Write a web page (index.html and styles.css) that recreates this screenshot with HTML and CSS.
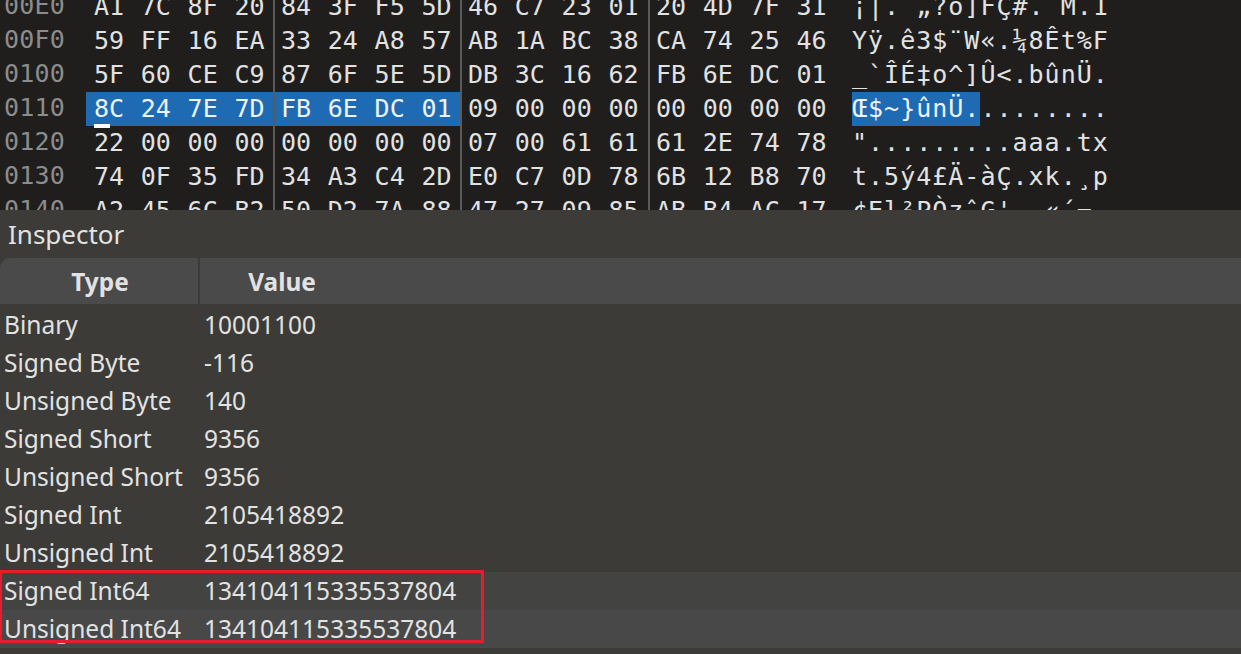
FILE: index.html
```html
<!DOCTYPE html>
<html lang="en">
<head>
<meta charset="utf-8">
<title>Inspector</title>
<link rel="stylesheet" href="styles.css">
</head>
<body>
<div class="app">
  <section class="hex">
    <div class="hexrow"><span class="off">00E0</span><div class="grp g1"><span>A1</span><span>7C</span><span>8F</span><span>20</span></div><div class="grp"><span>84</span><span>3F</span><span>F5</span><span>5D</span></div><div class="grp"><span>46</span><span>C7</span><span>23</span><span>01</span></div><div class="grp"><span>20</span><span>4D</span><span>7F</span><span>31</span></div><span class="asc">¡|. „?õ]FÇ#. M.1</span></div>
    <div class="hexrow"><span class="off">00F0</span><div class="grp g1"><span>59</span><span>FF</span><span>16</span><span>EA</span></div><div class="grp"><span>33</span><span>24</span><span>A8</span><span>57</span></div><div class="grp"><span>AB</span><span>1A</span><span>BC</span><span>38</span></div><div class="grp"><span>CA</span><span>74</span><span>25</span><span>46</span></div><span class="asc">Yÿ.ê3$¨W«.¼8Êt%F</span></div>
    <div class="hexrow"><span class="off">0100</span><div class="grp g1"><span>5F</span><span>60</span><span>CE</span><span>C9</span></div><div class="grp"><span>87</span><span>6F</span><span>5E</span><span>5D</span></div><div class="grp"><span>DB</span><span>3C</span><span>16</span><span>62</span></div><div class="grp"><span>FB</span><span>6E</span><span>DC</span><span>01</span></div><span class="asc">_`ÎÉ‡o^]Û&lt;.bûnÜ.</span></div>
    <div class="hexrow"><span class="off">0110</span><div class="grp g1 sel"><span class="cur">8C</span><span>24</span><span>7E</span><span>7D</span></div><div class="grp sel"><span>FB</span><span>6E</span><span>DC</span><span>01</span></div><div class="grp"><span>09</span><span>00</span><span>00</span><span>00</span></div><div class="grp"><span>00</span><span>00</span><span>00</span><span>00</span></div><span class="asc"><mark class="ascsel">Œ$~}ûnÜ.</mark>........</span></div>
    <div class="hexrow"><span class="off">0120</span><div class="grp g1"><span>22</span><span>00</span><span>00</span><span>00</span></div><div class="grp"><span>00</span><span>00</span><span>00</span><span>00</span></div><div class="grp"><span>07</span><span>00</span><span>61</span><span>61</span></div><div class="grp"><span>61</span><span>2E</span><span>74</span><span>78</span></div><span class="asc">".........aaa.tx</span></div>
    <div class="hexrow"><span class="off">0130</span><div class="grp g1"><span>74</span><span>0F</span><span>35</span><span>FD</span></div><div class="grp"><span>34</span><span>A3</span><span>C4</span><span>2D</span></div><div class="grp"><span>E0</span><span>C7</span><span>0D</span><span>78</span></div><div class="grp"><span>6B</span><span>12</span><span>B8</span><span>70</span></div><span class="asc">t.5ý4£Ä-àÇ.xk.¸p</span></div>
    <div class="hexrow"><span class="off">0140</span><div class="grp g1"><span>A2</span><span>45</span><span>6C</span><span>B2</span></div><div class="grp"><span>50</span><span>D2</span><span>7A</span><span>88</span></div><div class="grp"><span>47</span><span>27</span><span>09</span><span>85</span></div><div class="grp"><span>AB</span><span>B4</span><span>AC</span><span>17</span></div><span class="asc">¢El²PÒzˆG'..«´¬.</span></div>
  </section>
  <section class="inspector">
    <h2 class="title">Inspector</h2>
    <div class="thead"><div class="th th-type">Type</div><div class="th th-value">Value</div></div>
    <div class="tr"><span class="td-type">Binary</span><span>10001100</span></div>
    <div class="tr"><span class="td-type">Signed Byte</span><span>-116</span></div>
    <div class="tr"><span class="td-type">Unsigned Byte</span><span>140</span></div>
    <div class="tr"><span class="td-type">Signed Short</span><span>9356</span></div>
    <div class="tr"><span class="td-type">Unsigned Short</span><span>9356</span></div>
    <div class="tr"><span class="td-type">Signed Int</span><span>2105418892</span></div>
    <div class="tr"><span class="td-type">Unsigned Int</span><span>2105418892</span></div>
    <div class="tr tr-hi"><span class="td-type">Signed Int64</span><span>134104115335537804</span></div>
    <div class="tr tr-hi2"><span class="td-type">Unsigned Int64</span><span>134104115335537804</span></div>
    <div class="annot"></div>
  </section>
</div>
</body>
</html>
```
FILE: styles.css
```css
* { box-sizing: border-box; }
html, body { margin: 0; padding: 0; height: 100%; overflow: hidden; }
body { background: #3c3b37; color: #e2e2e2; font-family: "Noto Sans", sans-serif; }
.app { width: 1241px; height: 654px; display: flex; flex-direction: column; overflow: hidden; }
.hex { height: 210px; background: #1f1e1d; overflow: hidden; flex: none; font-family: "DejaVu Sans Mono", monospace; font-size: 25px; }
.hexrow { height: 34px; display: grid; grid-template-columns: 86px 187px 187px 188px 204px auto; line-height: 34px; }
.hexrow:first-child { margin-top: -10px; }
.off { padding-left: 4px; color: #8c8c8c; line-height: 32px; letter-spacing: 0.2px; }
.grp { display: grid; grid-template-columns: repeat(4, 46.8px); padding-left: 6px; border-left: 2px solid #5a5a58; }
.g1 { padding-left: 8px; border-left: 0; }
.grp.sel { background: #1f6bb3; color: #eef3f8; }
.grp > span { position: relative; }
.cur::after { content: ""; position: absolute; left: 0; top: 32px; width: 16px; height: 4px; background: #fff; }
.asc { white-space: pre; letter-spacing: 1px; }
.ascsel { background: #1f6bb3; color: #eef3f8; display: inline-block; height: 34px; }
.inspector { flex: 1; position: relative; }
.title { margin: 0; height: 48px; padding-left: 8px; font-weight: 400; font-size: 26px; line-height: 48px; }
.thead { height: 46px; display: flex; background: #4a4a4a; border-top-left-radius: 10px; margin-bottom: 2px; font-weight: 700; font-size: 24.4px; line-height: 48px; }
.th { text-align: center; }
.th-type { padding-left: 2px; border-right: 2px solid #3c3b37; width: 200px; }
.th-value { width: 164px; }
.tr { height: 38px; display: flex; padding-left: 4px; font-size: 24.5px; line-height: 38px; }
.td-type { width: 200px; flex: none; white-space: nowrap; }
.tr-hi { background: #434342; }
.tr-hi2 { background: #484848; }
.annot { position: absolute; left: -1px; top: 360px; width: 485px; height: 73px; border: 3px solid #e81c2c; }
```
